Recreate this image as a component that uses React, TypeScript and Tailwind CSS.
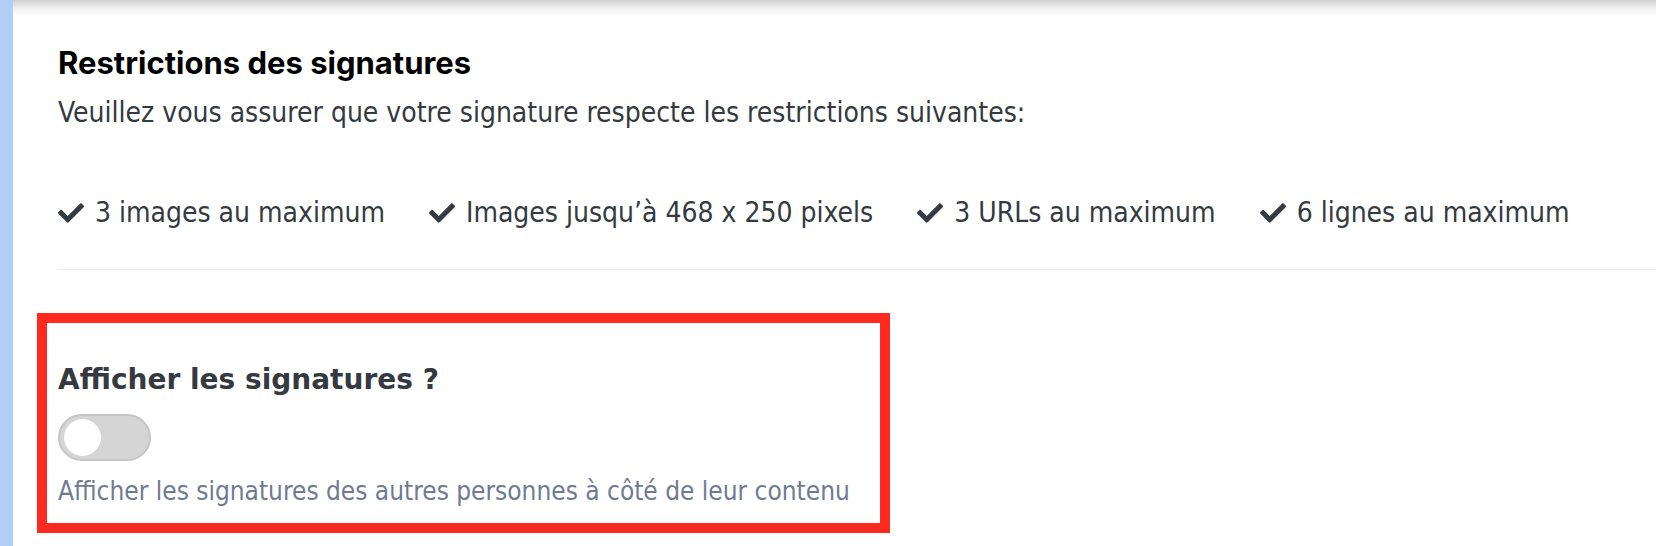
import React from "react";
import { FaCheck } from "react-icons/fa";

const items = [
  "3 images au maximum",
  "Images jusqu’à 468 x 250 pixels",
  "3 URLs au maximum",
  "6 lignes au maximum",
];

export default function App() {
  return (
    <div className="w-[1656px] h-[546px] bg-white overflow-hidden flex font-['DejaVu_Sans_Condensed','DejaVu_Sans',sans-serif]">
      <div className="w-[13px] shrink-0 bg-[#b1cff4]" />
      <div className="relative flex-1 flex flex-col">
        <div className="absolute top-0 left-0 right-0 h-[16px] bg-gradient-to-b from-[#cfcfcf] via-[#f0f0f0] to-white/0" />
        <div className="pl-[45px] pt-[47px]">
          <h2 className="font-['Inter',sans-serif] font-bold text-[31px] leading-[32px] text-black">
            Restrictions des signatures
          </h2>
          <p className="mt-[18px] text-[28px] leading-[32px] text-[#343a40]">
            Veuillez vous assurer que votre signature respecte les restrictions suivantes:
          </p>
          <ul className="mt-[68px] flex items-center gap-[44px] text-[28px] leading-[32px] text-[#343a40]">
            {items.map((t) => (
              <li key={t} className="flex items-center gap-[11px]">
                <FaCheck className="w-[26px] h-[26px] text-[#343a40]" />
                <span>{t}</span>
              </li>
            ))}
          </ul>
        </div>
        <div className="ml-[44px] mt-[40px] border-t border-[#ebebeb]" />
        <div className="ml-[24px] mt-[43px] w-[853px] h-[220px] border-[10px] border-[#ff2a1f] pl-[11px] pt-[41px]">
          <h3 className="font-['DejaVu_Sans',sans-serif] font-bold text-[28px] leading-[32px] text-[#343a40]">
            Afficher les signatures ?
          </h3>
          <div className="mt-[18px] w-[93px] h-[47px] rounded-full bg-[#d5d5d5] border-[2px] border-[#c6c6c6] flex items-center pl-[4px]">
            <div className="w-[37px] h-[37px] rounded-full bg-white" />
          </div>
          <p className="mt-[14px] text-[26px] leading-[32px] text-[#6e7b91]">
            Afficher les signatures des autres personnes à côté de leur contenu
          </p>
        </div>
      </div>
    </div>
  );
}
